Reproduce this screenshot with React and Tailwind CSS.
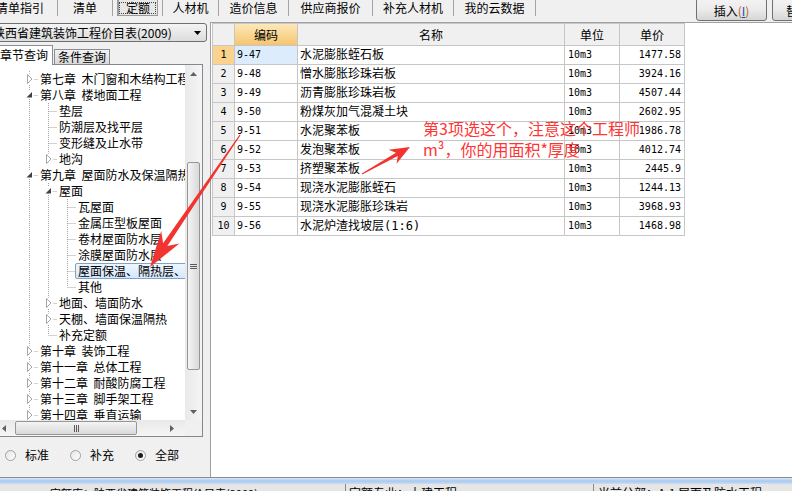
import React from "react";

const rows = [
    ["9-47", "水泥膨胀蛭石板", "1477.58"],
    ["9-48", "憎水膨胀珍珠岩板", "3924.16"],
    ["9-49", "沥青膨胀珍珠岩板", "4507.44"],
    ["9-50", "粉煤灰加气混凝土块", "2602.95"],
    ["9-51", "水泥聚苯板", "1986.78"],
    ["9-52", "发泡聚苯板", "4012.74"],
    ["9-53", "挤塑聚苯板", "2445.9"],
    ["9-54", "现浇水泥膨胀蛭石", "1244.13"],
    ["9-55", "现浇水泥膨胀珍珠岩", "3968.93"],
    ["9-56", "水泥炉渣找坡层(1:6)", "1468.98"],
];

// lv = depth, ic = c (collapsed) / e (expanded) / leaf, g = ancestor guide lines
const tree = [
    { lv: 1, ic: "c", t: "第七章  木门窗和木结构工程", g: [] },
    { lv: 1, ic: "e", t: "第八章  楼地面工程", g: [] },
    { lv: 2, t: "垫层", g: [1] },
    { lv: 2, t: "防潮层及找平层", g: [1] },
    { lv: 2, t: "变形缝及止水带", g: [1] },
    { lv: 2, ic: "c", t: "地沟", g: [1], last: true },
    { lv: 1, ic: "e", t: "第九章  屋面防水及保温隔热", g: [] },
    { lv: 2, ic: "e", t: "屋面", g: [1] },
    { lv: 3, t: "瓦屋面", g: [1, 2] },
    { lv: 3, t: "金属压型板屋面", g: [1, 2] },
    { lv: 3, t: "卷材屋面防水层", g: [1, 2] },
    { lv: 3, t: "涂膜屋面防水层", g: [1, 2] },
    { lv: 3, t: "屋面保温、隔热层、找坡层", g: [1, 2], sel: true },
    { lv: 3, t: "其他", g: [1, 2], last: true },
    { lv: 2, ic: "c", t: "地面、墙面防水", g: [1] },
    { lv: 2, ic: "c", t: "天棚、墙面保温隔热", g: [1] },
    { lv: 2, t: "补充定额", g: [1], last: true },
    { lv: 1, ic: "c", t: "第十章  装饰工程", g: [] },
    { lv: 1, ic: "c", t: "第十一章  总体工程", g: [] },
    { lv: 1, ic: "c", t: "第十二章  耐酸防腐工程", g: [] },
    { lv: 1, ic: "c", t: "第十三章  脚手架工程", g: [] },
    { lv: 1, ic: "c", t: "第十四章  垂直运输", g: [] },
];

const GX = { 1: 29.5, 2: 48.5, 3: 67.5 };
const TX = { 1: 40, 2: 59, 3: 78 };

function arrowPoints(tail, tip, head, half, notch, tw, sw) {
    const dx = tip[0] - tail[0];
    const dy = tip[1] - tail[1];
    const len = Math.hypot(dx, dy);
    const ux = dx / len, uy = dy / len, nx = -uy, ny = ux;
    const p = (b, k, w) => [b[0] + ux * k + nx * w, b[1] + uy * k + ny * w];
    return [
        p(tail, 0, tw),
        p(tip, -notch, sw),
        p(tip, -head, half),
        tip,
        p(tip, -head, -half),
        p(tip, -notch, -sw),
        p(tail, 0, -tw),
    ]
        .map((q) => q.map((v) => v.toFixed(1)).join(","))
        .join(" ");
}

function Sep() {
    return <div className="w-px h-[16px] bg-[#a3a3a3] shrink-0" />;
}

function TreeRow({ r }) {
    const x = GX[r.lv];
    const w = TX[r.lv];
    const dot = { stroke: "#a5a5a5", strokeDasharray: "1 1" };
    return (
        <div className="h-[16px] flex items-center whitespace-pre">
            <svg width={w} height="16" className="shrink-0">
                {r.g.map((l) => (
                    <line key={l} x1={GX[l]} y1="0" x2={GX[l]} y2="16" {...dot} />
                ))}
                <line x1={x} y1="0" x2={x} y2={r.last ? 8 : 16} {...dot} />
                <line x1={x} y1="8.5" x2={w - 2} y2="8.5" {...dot} />
                {r.ic === "c" && (
                    <>
                        <rect x={x - 3.5} y="2.5" width="8" height="11" fill="#fff" />
                        <polygon
                            points={`${x - 2},3.5 ${x + 2.5},8 ${x - 2},12.5`}
                            fill="#fff"
                            stroke="#a6a6a6"
                        />
                    </>
                )}
                {r.ic === "e" && (
                    <>
                        <rect x={x - 4} y="3" width="8" height="9" fill="#fff" />
                        <polygon
                            points={`${x + 2.5},5 ${x + 2.5},10.5 ${x - 3},10.5`}
                            fill="#404040"
                        />
                    </>
                )}
            </svg>
            {r.sel ? (
                <span className="-ml-[3px] pl-[2px] pr-[4px] h-[16px] leading-[14px] border border-[#7da2ce] rounded-[2px] bg-linear-to-b from-[#eef6fe] to-[#d5e7fc]">
                    {r.t}
                </span>
            ) : (
                <span className="leading-[16px]">{r.t}</span>
            )}
        </div>
    );
}

function Tri({ dir }) {
    const pts = {
        up: "0,4 3.5,0 7,4",
        down: "0,0 7,0 3.5,4",
        left: "4,0 4,7 0,3.5",
        right: "0,0 4,3.5 0,7",
    }[dir];
    const vert = dir === "up" || dir === "down";
    return (
        <svg width={vert ? 7 : 4} height={vert ? 4 : 7}>
            <polygon points={pts} fill="#606060" />
        </svg>
    );
}

function Radio({ on, label }) {
    return (
        <div className="w-[65px] pl-[5px] flex items-center gap-[9px] shrink-0">
            <span className="w-[11px] h-[11px] rounded-full border border-[#a0a0a0] bg-linear-to-br from-[#e4e4e4] to-white flex items-center justify-center">
                {on && <span className="w-[5px] h-[5px] rounded-full bg-[#1b1b1b]" />}
            </span>
            <span>{label}</span>
        </div>
    );
}

function LeftPanel() {
    return (
        <div className="w-[210px] shrink-0 flex flex-col">
            {/* library dropdown */}
            <div className="-ml-[10px] mt-px w-[217px] h-[19px] rounded-[3px] border border-[#707070] bg-linear-to-b from-[#f4f4f4] to-[#dcdcdc] flex items-center pl-[2px] whitespace-nowrap">
                <span>陕西省建筑装饰工程价目表(2009)</span>
                <svg width="7" height="4" className="ml-auto mr-[5px]">
                    <polygon points="0,0 7,0 3.5,4" fill="#000" />
                </svg>
            </div>

            {/* tabs */}
            <div className="mt-[3px] h-[20px] flex items-end">
                <div className="relative z-10 -ml-[6px] w-[59px] h-[20px] bg-white border border-b-0 border-[#898c95] pl-[5px] leading-[18px]">
                    章节查询
                </div>
                <div className="ml-px w-[56px] h-[16px] border border-[#898c95] bg-linear-to-b from-[#f2f2f2] to-[#d9d9d9] text-center leading-[14px]">
                    条件查询
                </div>
            </div>

            {/* tree box */}
            <div className="-mt-px -ml-px w-[204px] h-[373px] border border-[#828790] bg-white flex flex-col">
                <div className="h-[355px] flex">
                    <div className="w-[185px] overflow-hidden pt-[6px]">
                        {tree.map((r, i) => (
                            <TreeRow key={i} r={r} />
                        ))}
                    </div>
                    <div className="w-[17px] bg-linear-to-r from-[#e9e9e9] to-[#f5f5f5] flex flex-col">
                        <div className="h-[17px] flex items-center justify-center">
                            <Tri dir="up" />
                        </div>
                        <div className="h-[80px]" />
                        <div className="mx-[2px] h-[208px] rounded-[2px] border border-[#979797] bg-linear-to-r from-[#f4f4f4] to-[#d9d9d9] flex flex-col items-center justify-center gap-[1px]">
                            <div className="w-[7px] h-px bg-[#5a5a5a]" />
                            <div className="w-[7px] h-px bg-[#5a5a5a]" />
                            <div className="w-[7px] h-px bg-[#5a5a5a]" />
                        </div>
                        <div className="flex-1" />
                        <div className="h-[17px] flex items-center justify-center">
                            <Tri dir="down" />
                        </div>
                    </div>
                </div>
                <div className="h-[16px] flex">
                    <div className="w-[185px] flex bg-linear-to-b from-[#e9e9e9] to-[#f5f5f5]">
                        <div className="w-[14px] flex items-center pl-[2px]">
                            <Tri dir="left" />
                        </div>
                        <div className="ml-px my-[1px] w-[122px] rounded-[2px] border border-[#979797] bg-linear-to-b from-[#f4f4f4] to-[#d9d9d9] flex items-center justify-center gap-[1px]">
                            <div className="w-px h-[7px] bg-[#5a5a5a]" />
                            <div className="w-px h-[7px] bg-[#5a5a5a]" />
                            <div className="w-px h-[7px] bg-[#5a5a5a]" />
                        </div>
                        <div className="flex-1" />
                        <div className="w-[17px] flex items-center pl-[2px]">
                            <Tri dir="right" />
                        </div>
                    </div>
                    <div className="flex-1 bg-[#f0f0f0]" />
                </div>
            </div>

            {/* filter */}
            <div className="mt-[10px] h-[16px] flex items-center">
                <Radio label="标准" />
                <Radio label="补充" />
                <Radio label="全部" on />
            </div>
        </div>
    );
}

function QuotaTable() {
    const cell = "border-r border-b border-[#c6c6c6] flex items-center overflow-hidden whitespace-nowrap";
    const mono = "font-['DejaVu_Sans_Mono',monospace] text-[10px]";
    return (
        <div className="ml-px w-[473px] border-l border-t border-[#c6c6c6] grid grid-cols-[22px_63px_267px_55px_65px]">
            <div className={`${cell} h-[22px] bg-[#f0f0f0]`} />
            <div className={`${cell} h-[22px] justify-center bg-linear-to-b from-[#fde8b8] to-[#f5c56d]`}>编码</div>
            <div className={`${cell} h-[22px] justify-center bg-[#f0f0f0]`}>名称</div>
            <div className={`${cell} h-[22px] justify-center bg-[#f0f0f0]`}>单位</div>
            <div className={`${cell} h-[22px] justify-center bg-[#f0f0f0]`}>单价</div>

            {rows.map(([code, name, price], i) => (
                <React.Fragment key={code}>
                    <div className={`${cell} ${mono} h-[19px] justify-center ${i === 0 ? "bg-[#fbd38e]" : "bg-[#f0f0f0]"}`}>
                        {i + 1}
                    </div>
                    <div className={`${cell} ${mono} h-[19px] pl-[2px] ${i === 0 ? "bg-[#dcecfc]" : "bg-white"}`}>
                        {code}
                    </div>
                    <div className={`${cell} h-[19px] pl-[2px] font-['DejaVu_Sans_Mono','Noto_Sans_CJK_SC',monospace]`}>
                        {name}
                    </div>
                    <div className={`${cell} ${mono} h-[19px] pl-[3px]`}>10m3</div>
                    <div className={`${cell} ${mono} h-[19px] justify-end pr-[3px]`}>{price}</div>
                </React.Fragment>
            ))}
        </div>
    );
}

export default function App() {
    const btn =
        "shrink-0 h-[23px] rounded-[3px] border border-[#707070] bg-linear-to-b from-[#f3f3f3] via-[#ebebeb] to-[#d6d6d6] pt-[3px] text-[12px] text-center";
    return (
        <div className="relative w-[792px] h-[491px] overflow-hidden bg-[#f0f0f0] font-['Noto_Sans_CJK_SC',sans-serif] text-[12px] text-black leading-none">
            {/* top bar */}
            <div className="h-[22px] flex shrink-0">
                <div className="flex h-[16px] items-center shrink-0">
                    <div className="-ml-[17px] w-[74px] text-center shrink-0">清单指引</div>
                    <Sep />
                    <div className="w-[54px] text-center shrink-0">清单</div>
                    <Sep />
                    <div className="w-[49px] h-full flex justify-center shrink-0">
                        <div className="w-[41px] h-full border border-t-0 border-l-2 border-[#9a9a9a] bg-[#e7e7e7] outline-1 outline-dotted outline-[#444] -outline-offset-3 flex items-center justify-center">
                            定额
                        </div>
                    </div>
                    <Sep />
                    <div className="w-[55px] text-center shrink-0">人材机</div>
                    <Sep />
                    <div className="w-[69px] text-center shrink-0">造价信息</div>
                    <Sep />
                    <div className="w-[83px] text-center shrink-0">供应商报价</div>
                    <Sep />
                    <div className="w-[80px] text-center shrink-0">补充人材机</div>
                    <Sep />
                    <div className="w-[81px] text-center shrink-0">我的云数据</div>
                    <Sep />
                </div>
                <div className="ml-auto -mr-[50px] -mt-[2px] flex gap-[5px] shrink-0">
                    <button className={`${btn} w-[71px]`}>
                        插入<span className="text-[#c06010]">(</span>
                        <span className="underline text-[#1a4fb0]">I</span>
                        <span className="text-[#c06010]">)</span>
                    </button>
                    <button className={`${btn} w-[70px] text-left pl-[13px]`}>替换(R)</button>
                </div>
            </div>

            {/* main */}
            <div className="h-[455px] flex shrink-0">
                <LeftPanel />
                <div className="flex-1 bg-white border-l border-t border-[#a0a0a0]">
                    <QuotaTable />
                </div>
            </div>

            {/* status bar */}
            <div className="border-t border-[#8c8c8c]">
                <div className="h-[6px] bg-linear-to-b from-[#dbe9f8] via-[#a9c9ee] to-[#c8ddf5]" />
                <div className="h-[20px] flex bg-[#e6e6e6] leading-[18px] whitespace-nowrap">
                    <div className="w-[345px] pl-[50px] text-[11px] overflow-hidden">定额库：陕西省建筑装饰工程价目表(2009)</div>
                    <div className="w-[248px] border-l border-[#8a8a8a] pl-[3px] overflow-hidden">定额专业：土建工程</div>
                    <div className="flex-1 border-l border-[#8a8a8a] pl-[4px] overflow-hidden">当前分部：A.1    屋面及防水工程</div>
                </div>
            </div>

            {/* annotation */}
            <svg className="absolute left-0 top-0 pointer-events-none" width="792" height="491">
                <polygon points={arrowPoints([240, 135], [150, 267], 36, 11, 27, 0.6, 2.5)} fill="#f23330" />
                <polygon points={arrowPoints([362, 174], [410, 147], 20, 8, 15, 0.5, 1.8)} fill="#f23330" />
            </svg>
            <div className="absolute left-[423px] top-[118px] text-[16px] leading-[21px] text-[#ff3434] whitespace-nowrap">
                <div>第3项选这个，注意这个工程师</div>
                <div>m³，你的用面积*厚度</div>
            </div>
        </div>
    );
}
